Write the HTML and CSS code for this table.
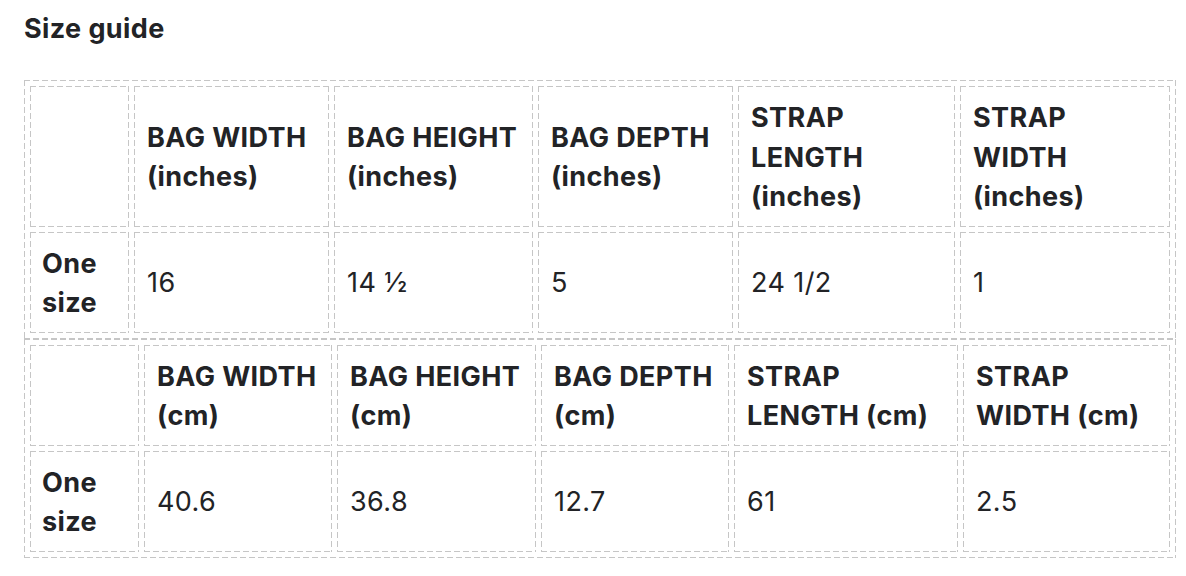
FILE: index.html
```html
<!DOCTYPE html>
<html lang="en">
<head>
<meta charset="utf-8">
<title>Size guide</title>
<link rel="stylesheet" href="styles.css">
</head>
<body>
<div class="sheet">
  <h2 class="title">Size guide</h2>
  <table class="guide guide-in">
    <colgroup>
      <col class="c1"><col class="c2"><col class="c3"><col class="c4"><col class="c5"><col class="c6">
    </colgroup>
    <tr class="head-row tall">
      <th></th>
      <th>BAG WIDTH (inches)</th>
      <th>BAG HEIGHT (inches)</th>
      <th>BAG DEPTH (inches)</th>
      <th>STRAP LENGTH (inches)</th>
      <th>STRAP WIDTH (inches)</th>
    </tr>
    <tr>
      <th class="size">One size</th>
      <td>16</td>
      <td>14 ½</td>
      <td>5</td>
      <td>24 1/2</td>
      <td>1</td>
    </tr>
  </table>
  <table class="guide guide-cm">
    <colgroup>
      <col class="c1"><col class="c2"><col class="c3"><col class="c4"><col class="c5"><col class="c6">
    </colgroup>
    <tr class="head-row">
      <th></th>
      <th>BAG WIDTH (cm)</th>
      <th>BAG HEIGHT (cm)</th>
      <th>BAG DEPTH (cm)</th>
      <th>STRAP LENGTH (cm)</th>
      <th>STRAP WIDTH (cm)</th>
    </tr>
    <tr>
      <th class="size">One size</th>
      <td>40.6</td>
      <td>36.8</td>
      <td>12.7</td>
      <td>61</td>
      <td>2.5</td>
    </tr>
  </table>
</div>
</body>
</html>
```

FILE: styles.css
```css
html, body {
  margin: 0;
  padding: 0;
  background: #ffffff;
}

body {
  font-family: Inter, "Noto Sans", "Liberation Sans", sans-serif;
  color: #222326;
  -webkit-font-smoothing: antialiased;
}

.sheet {
  padding: 9px 10px 0 24px;
}

.title {
  margin: 0 0 32px 0;
  font-size: 27px;
  line-height: 39px;
  font-weight: 700;
  letter-spacing: 0.4px;
}

.guide,
.guide th,
.guide td {
  border: 1px solid transparent;
  background-origin: border-box;
  background-image:
    repeating-linear-gradient(90deg, #c6c6c6 0 6px, transparent 6px 9px),
    repeating-linear-gradient(90deg, #c6c6c6 0 6px, transparent 6px 9px),
    repeating-linear-gradient(180deg, #c6c6c6 0 6px, transparent 6px 9px),
    repeating-linear-gradient(180deg, #c6c6c6 0 6px, transparent 6px 9px);
  background-size: 100% 1px, 100% 1px, 1px 100%, 1px 100%;
  background-position: left top, left bottom, left top, right top;
  background-repeat: no-repeat;
}

.guide {
  width: 1152px;
  table-layout: fixed;
  border-spacing: 5px;
  font-size: 27px;
  line-height: 39.5px;
  letter-spacing: 0.4px;
}

.guide th,
.guide td {
  padding: 11px 12px 9px 12px;
  text-align: left;
  vertical-align: middle;
  box-sizing: border-box;
}

.guide th {
  font-weight: 700;
}

.guide td {
  font-weight: 400;
}

.guide th.size {
  padding-left: 11px;
}

.guide-in .c1 { width: 99px; }
.guide-in .c2 { width: 195px; }
.guide-in .c3 { width: 199px; }
.guide-in .c4 { width: 195px; }
.guide-in .c5 { width: 217px; }
.guide-in .c6 { width: 210px; }

.guide-cm .c1 { width: 109px; }
.guide-cm .c2 { width: 188px; }
.guide-cm .c3 { width: 199px; }
.guide-cm .c4 { width: 188px; }
.guide-cm .c5 { width: 224px; }
.guide-cm .c6 { width: 207px; }
```
